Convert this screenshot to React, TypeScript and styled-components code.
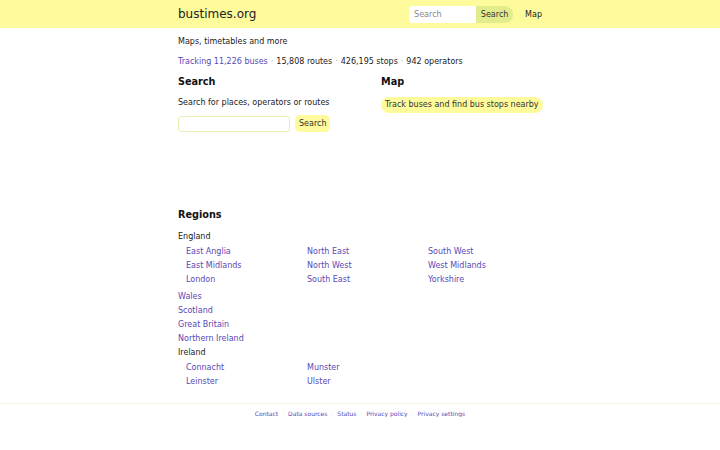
import styled, { createGlobalStyle } from "styled-components";

const GlobalStyle = createGlobalStyle`
  body {
    margin: 0;
    font-family: "DejaVu Sans", sans-serif;
    font-size: 8px;
    color: #222;
    background: #fff;
  }
  a {
    color: #5848b5;
    text-decoration: none;
  }
`;

const englandRegions = [
  "East Anglia",
  "East Midlands",
  "London",
  "North East",
  "North West",
  "South East",
  "South West",
  "West Midlands",
  "Yorkshire",
];

const otherRegions = ["Wales", "Scotland", "Great Britain", "Northern Ireland"];

const irelandRegions = ["Connacht", "Leinster", "Munster", "Ulster"];

const footerLinks = ["Contact", "Data sources", "Status", "Privacy policy", "Privacy settings"];

function App() {
  return (
    <>
      <GlobalStyle />
      <Header>
        <Wrap className="header-inner">
          <Logo href="#">bustimes.org</Logo>
          <HeaderForm onSubmit={(e) => e.preventDefault()}>
            <input placeholder="Search" />
            <button type="submit">Search</button>
          </HeaderForm>
          <NavLink href="#">Map</NavLink>
        </Wrap>
      </Header>
      <Main>
        <Wrap>
          <Tagline>Maps, timetables and more</Tagline>
          <Stats>
            <a href="#">Tracking 11,226 buses</a>
            <Dot>·</Dot>15,808 routes<Dot>·</Dot>426,195 stops<Dot>·</Dot>942 operators
          </Stats>
          <Columns>
            <Column>
              <Heading $gap={5}>Search</Heading>
              <Para>Search for places, operators or routes</Para>
              <SearchForm onSubmit={(e) => e.preventDefault()}>
                <input />
                <button type="submit">Search</button>
              </SearchForm>
            </Column>
            <Column>
              <Heading>Map</Heading>
              <Pill href="#">Track buses and find bus stops nearby</Pill>
            </Column>
          </Columns>
          <Heading $gap={7}>Regions</Heading>
          <Country>England</Country>
          <SubList>
            {englandRegions.map((r) => (
              <li key={r}>
                <a href="#">{r}</a>
              </li>
            ))}
          </SubList>
          <TopList>
            {otherRegions.map((r) => (
              <li key={r}>
                <a href="#">{r}</a>
              </li>
            ))}
          </TopList>
          <Country>Ireland</Country>
          <SubList>
            {irelandRegions.map((r) => (
              <li key={r}>
                <a href="#">{r}</a>
              </li>
            ))}
          </SubList>
        </Wrap>
      </Main>
      <Footer>
        {footerLinks.map((l, i) => (
          <span key={l}>
            {i > 0 && <FootDot>·</FootDot>}
            <a href="#">{l}</a>
          </span>
        ))}
      </Footer>
    </>
  );
}

export default App;

const Wrap = styled.div`
  width: 364px;
  margin: 0 auto;

  &.header-inner {
    display: flex;
    align-items: center;
    height: 28px;
  }
`;

const Header = styled.header`
  background: #fefb9c;
`;

const Logo = styled.a`
  && {
    color: #222;
  }
  font-size: 12px;
  margin-right: auto;
`;

const HeaderForm = styled.form`
  display: flex;
  height: 17px;

  input {
    width: 67px;
    box-sizing: border-box;
    border: none;
    border-radius: 4px 0 0 4px;
    padding: 0 5px;
    font-family: inherit;
    font-size: 8px;
    background: #fff;
    &::placeholder {
      color: #888;
    }
  }
  button {
    width: 37px;
    border: none;
    border-radius: 0 8px 8px 0;
    background: #e2ec8d;
    color: #333;
    font-family: inherit;
    font-size: 8px;
    padding: 0;
  }
`;

const NavLink = styled.a`
  && {
    color: #222;
  }
  margin-left: 12px;
  font-size: 8px;
`;

const Main = styled.main`
  padding-top: 4px;
  padding-bottom: 11px;
`;

const Tagline = styled.p`
  margin: 0;
  line-height: 20px;
`;

const Stats = styled.p`
  margin: 0;
  line-height: 20px;
`;

const Dot = styled.span`
  color: #aaa;
  margin: 0 3px;
`;

const Columns = styled.div`
  display: grid;
  grid-template-columns: 203px 1fr;
  height: 133px;
`;

const Column = styled.div`
  display: flex;
  flex-direction: column;
  align-items: flex-start;
`;

const Heading = styled.h2<{ $gap?: number }>`
  font-size: 9.7px;
  font-weight: bold;
  margin: 2px 0 ${(p) => p.$gap ?? 4}px;
  line-height: 16px;
  color: #111;
`;

const Para = styled.p`
  margin: 0 0 4px;
  line-height: 16px;
`;

const SearchForm = styled.form`
  display: flex;
  align-items: center;
  gap: 5px;

  input {
    width: 112px;
    height: 16px;
    box-sizing: border-box;
    border: 1px solid #eeeeb8;
    border-radius: 3px;
  }
  button {
    height: 17px;
    border: none;
    border-radius: 5px;
    background: #fefb9c;
    color: #333;
    font-family: inherit;
    font-size: 8px;
    padding: 0 4px;
  }
`;

const Pill = styled.a`
  display: block;
  margin-top: 3px;
  background: #fefb9c;
  border-radius: 8px;
  padding: 2px 4px;
  line-height: 12px;
  white-space: nowrap;
  && {
    color: #333;
  }
`;

const Country = styled.div`
  line-height: 14px;
`;

const SubList = styled.ul`
  list-style: none;
  margin: 1px 0 3px;
  padding: 0 0 0 8px;
  width: 363px;
  columns: 3;
  column-gap: 0;

  li {
    line-height: 14px;
  }
`;

const TopList = styled.ul`
  list-style: none;
  margin: 0;
  padding: 0;

  li {
    line-height: 14px;
  }
`;

const Footer = styled.footer`
  border-top: 1px solid #f8f8d8;
  text-align: center;
  font-size: 6px;
  padding-top: 6px;

  a {
    color: #5848b5;
  }
`;

const FootDot = styled.span`
  color: #bbb;
  margin: 0 4px;
`;
